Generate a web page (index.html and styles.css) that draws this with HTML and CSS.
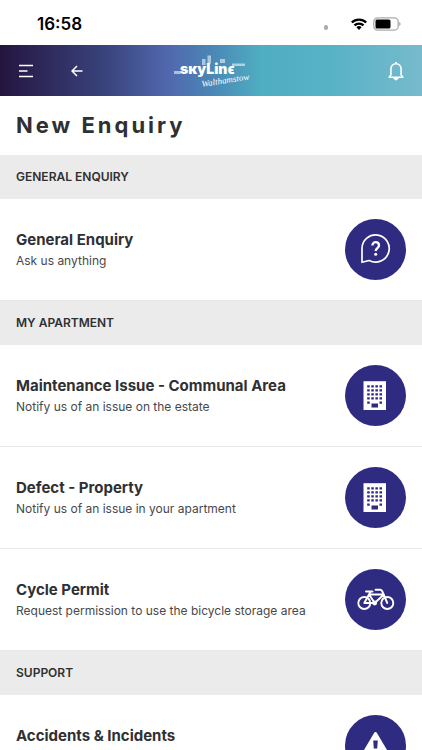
FILE: index.html
```html
<!DOCTYPE html>
<html lang="en">
<head>
<meta charset="utf-8">
<meta name="viewport" content="width=device-width, initial-scale=1">
<title>New Enquiry</title>
<link rel="stylesheet" href="styles.css">
</head>
<body>
<div class="status">
  <span class="time">16:58</span>
  <div class="indicators">
    <span class="signal"></span>
    <svg class="wifi" width="16" height="12" viewBox="0 0 16 12" fill="none" stroke="#000" stroke-width="2.3"><path d="M.8 4.5a10.3 10.3 0 0 1 14.4 0M3.5 7.4a6.4 6.4 0 0 1 9 0"/><path d="M8 12 5.4 9.3a3.8 3.8 0 0 1 5.2 0z" fill="#000" stroke="none"/></svg>
    <svg class="battery" width="28" height="14" viewBox="0 0 28 14"><rect x=".8" y=".8" width="24.4" height="12.4" rx="4" fill="none" stroke="#aaa" stroke-width="1.3"/><rect x="2.5" y="2.5" width="15" height="9" rx="1.5"/><path d="M26.2 5v4q1.4-.7 1.4-2t-1.4-2" fill="#aaa"/></svg>
  </div>
</div>
<header class="bar">
  <button class="icon-button" type="button" aria-label="Menu">
    <svg width="15" height="14" viewBox="0 0 15 14" stroke="#fff" stroke-width="1.5"><path d="M1 1.500h14M1 7h8.500M1 12.500h14"/></svg>
  </button>
  <a class="icon-button back" href="#" aria-label="Back">
    <svg width="12" height="12" viewBox="0 0 12 12" fill="none" stroke="#fff" stroke-width="1.500"><path d="M11.500 6H1.500M6 1 1 6l5 5"/></svg>
  </a>
  <svg class="logo" width="78" height="36" viewBox="0 0 78 36" role="img" aria-label="Skyline Walthamstow">
    <g fill="#fff">
      <path fill-opacity=".55" d="M2 18h7v3H2zM30 6h3.500v6H30zM35.500 2.500H39v8h-3.500zM48 6h5v4h-5zM60 10.500h13v2.500H60z"/>
      <text class="wordmark" y="21" x="8">sĸyLinϵ</text>
      <text class="script" x="30" y="34" transform="rotate(-9 30 34)">Walthamstow</text>
    </g>
  </svg>
  <button class="icon-button bell" type="button" aria-label="Notifications">
    <svg width="16" height="20" viewBox="0 0 16 20" fill="none" stroke="#fff" stroke-width="1.600" stroke-linejoin="round"><path d="M2.900 14V8.200C2.900 4.900 5 2.700 8 2.700s5.100 2.200 5.100 5.500V14l1.700 2.200H1.200z"/><path d="M8 2.500V.9M6.300 17.300h3.400L8 18.600z" stroke-width="1.800"/></svg>
  </button>
</header>
<main>
  <h1 class="title">New Enquiry</h1>

  <section>
    <h2 class="section">GENERAL ENQUIRY</h2>
    <a class="row" href="#">
      <span class="text"><span class="name">General Enquiry</span><span class="note">Ask us anything</span></span>
      <span class="disc"><svg width="61" height="61" viewBox="0 0 61 61" fill="none" stroke="#fff" stroke-width="1.700" stroke-linejoin="round"><path d="M17 43.300V29.500a13.600 13.600 0 1 1 7.200 12z"/><path d="M27.400 26.500c0-4.500 6.600-4.400 6.600 0 0 2.700-3.300 2.700-3.300 5.500" stroke-width="2.300"/><circle cx="30.700" cy="35.300" r="1.500" fill="#fff" stroke="none"/></svg></span>
    </a>
  </section>

  <section>
    <h2 class="section">MY APARTMENT</h2>
    <a class="row" href="#">
      <span class="text"><span class="name">Maintenance Issue - Communal Area</span><span class="note">Notify us of an issue on the estate</span></span>
      <span class="disc"><svg width="61" height="61" viewBox="0 0 61 61"><path d="M18.500 16.200h22.500v28.800H18.500z" fill="#fff"/><path d="M22.200 21.400h15M22.200 25.400h15M22.200 29.400h15M22.200 33.400h15" stroke="#2e2b80" stroke-width="2.300" stroke-dasharray="2.500 1.600"/><path d="M22.200 36.400h2.500v2.300h-2.500zM34.500 36.400h2.500v2.300h-2.500zM26.500 38.500h6.500v4h-6.500z" fill="#2e2b80"/></svg></span>
    </a>
    <a class="row" href="#">
      <span class="text"><span class="name">Defect - Property</span><span class="note">Notify us of an issue in your apartment</span></span>
      <span class="disc"><svg width="61" height="61" viewBox="0 0 61 61"><path d="M18.500 16.200h22.500v28.800H18.500z" fill="#fff"/><path d="M22.200 21.400h15M22.200 25.400h15M22.200 29.400h15M22.200 33.400h15" stroke="#2e2b80" stroke-width="2.300" stroke-dasharray="2.500 1.600"/><path d="M22.200 36.400h2.500v2.300h-2.500zM34.500 36.400h2.500v2.300h-2.500zM26.500 38.500h6.500v4h-6.500z" fill="#2e2b80"/></svg></span>
    </a>
    <a class="row" href="#">
      <span class="text"><span class="name">Cycle Permit</span><span class="note">Request permission to use the bicycle storage area</span></span>
      <span class="disc"><svg width="61" height="61" viewBox="0 0 61 61" fill="none" stroke="#fff" stroke-width="1.900" stroke-linecap="round" stroke-linejoin="round"><circle cx="19.300" cy="34" r="6"/><circle cx="42.300" cy="34" r="6"/><path d="M19.300 34h10.400l9.200-8.500H24l5.700 8.500M19.300 34l6.200-11.300M21 22.500h6.500M30.500 20.700h4.700c1 0 1.500.5 1.900 1.300L42.300 34"/><circle cx="29.700" cy="34" r="1.500" fill="#fff"/></svg></span>
    </a>
  </section>

  <section>
    <h2 class="section">SUPPORT</h2>
    <a class="row" href="#">
      <span class="text"><span class="name">Accidents &amp; Incidents</span></span>
      <span class="disc"><svg width="61" height="61" viewBox="0 0 61 61"><path d="M30.500 18.500 45 43H16z" fill="#fff" stroke="#fff" stroke-width="3" stroke-linejoin="round"/><path d="M28.200 25.500h4.600l-.6 8h-3.400zM28.400 35.500h4.200V39h-4.200z" fill="#2e2b80"/></svg></span>
    </a>
  </section>
</main>
</body>
</html>
```

FILE: styles.css
```css
* { box-sizing: border-box; }
body {
  display: flex;
  flex-direction: column;
  height: 100vh;
  margin: 0;
  background: #fff;
  color: #303032;
  font-family: Inter, "Liberation Sans", sans-serif;
}
main {
  flex: 1;
  min-height: 0;
  overflow-y: auto;
  scrollbar-width: none;
}
svg { display: block; }

.status {
  flex: none;
  display: flex;
  align-items: center;
  justify-content: space-between;
  height: 45px;
  padding: 2px 21px 0 37px;
  color: #000;
}
.time { font-size: 17px; font-weight: 600; }
.indicators { display: flex; align-items: center; }
.signal {
  width: 4px;
  height: 5px;
  margin: 7px 23px 0 0;
  border-radius: 2px;
  background: #aaa;
}
.wifi { margin-right: 6px; }

.bar {
  position: relative;
  flex: none;
  display: flex;
  align-items: center;
  height: 51px;
  padding: 0 18px;
  background: linear-gradient(90deg, #24153f 0%, #2f2b5e 12%, #39437c 25%, #5168ae 40%, #4a86b5 50%, #50aec2 62%, #57b2c6 78%, #77bacd 100%);
}
.icon-button {
  display: grid;
  place-items: center;
  padding: 0;
  border: 0;
  background: none;
}
.back { margin-left: 38px; }
.bell { margin-left: auto; }
.logo {
  position: absolute;
  left: 50%;
  top: 8px;
  margin-left: -39px;
}
.wordmark { font: 900 14px Inter, sans-serif; }
.script { font: italic 400 9px "Liberation Serif", serif; }

.title {
  margin: 0;
  padding: 0 16px;
  font-size: 22px;
  font-weight: 700;
  line-height: 59px;
  letter-spacing: 3px;
}
.section {
  margin: 0;
  padding: 0 16px;
  background: #ebebeb;
  font-size: 12px;
  font-weight: 600;
  line-height: 44px;
}
.row {
  display: flex;
  align-items: center;
  justify-content: space-between;
  gap: 16px;
  min-height: 102px;
  padding: 0 16px;
  border-bottom: 1px solid #e8e8e8;
  color: inherit;
  text-decoration: none;
}
.text {
  display: grid;
  align-content: start;
  gap: 1px;
  min-height: 42px;
  padding-top: 1px;
}
.name { font-size: 15px; font-weight: 700; line-height: 20px; }
.note { color: #48484a; font-size: 12px; line-height: 20px; }
.disc {
  flex: none;
  border-radius: 50%;
  background: #2e2b80;
}
```
